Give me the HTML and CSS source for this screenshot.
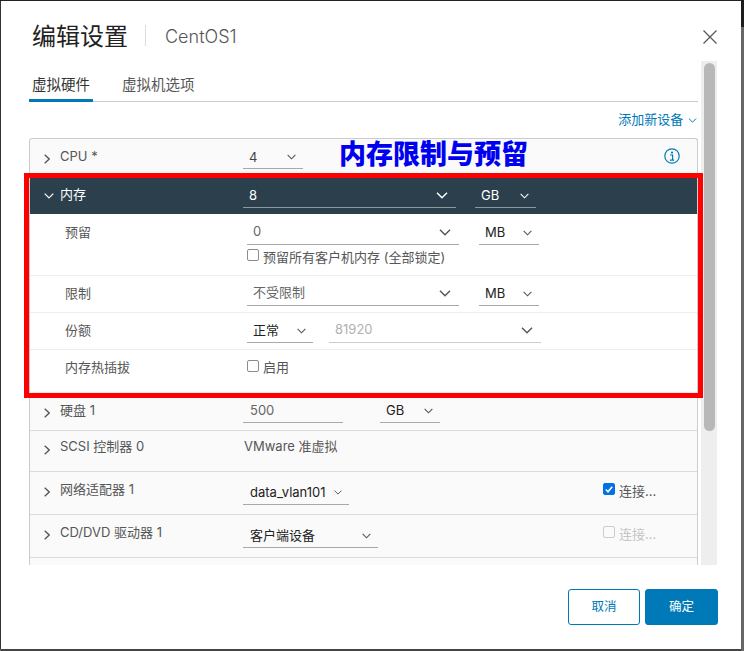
FILE: index.html
```html
<!DOCTYPE html>
<html>
<head>
    <meta charset="utf-8" />
    <title>编辑设置</title>
    <link rel="stylesheet" href="styles.css">
</head>
<body>
    <svg class="defs" width="0" height="0">
        <symbol id="chev" viewBox="0 0 10 6"><path d="M.7.7 5 5 9.3.7" fill="none" stroke="currentColor" stroke-width="1.2"/></symbol>
        <symbol id="caret" viewBox="0 0 6 10"><path d="M.7.7 5.2 5 .7 9.3" fill="none" stroke="currentColor" stroke-width="1.3"/></symbol>
    </svg>
    <div class="dialog">
        <div class="header">
            <h1 class="title">编辑设置</h1>
            <span class="divider"></span>
            <span class="vmname">CentOS1</span>
            <svg class="close" width="14" height="14" viewBox="0 0 14 14"><path d="M.5.5 13.5 13.5M13.5.5.5 13.5" fill="none" stroke="#555" stroke-width="1.2"/></svg>
        </div>
        <div class="main">
            <div class="content">
                <div class="tabs">
                    <span class="tab tab-active">虚拟硬件</span>
                    <span class="tab">虚拟机选项</span>
                </div>
                <div class="toolbar">
                    <span class="add">添加新设备 <svg class="chev-sm" width="9" height="5"><use href="#chev"/></svg></span>
                </div>
                <div class="table">
                    <div class="row row-cpu">
                        <svg class="caret" width="6" height="10"><use href="#caret"/></svg>
                        <span class="label">CPU *</span>
                        <span class="field w60"><span class="val down">4</span><svg class="chev" width="9" height="6"><use href="#chev"/></svg></span>
                        <svg class="info" width="16" height="16" viewBox="0 0 16 16"><circle cx="8" cy="8" r="7.2" fill="none" stroke="#0079b8" stroke-width="1.2"/><circle cx="8" cy="4.6" r="1.1" fill="#0079b8"/><path d="M6 7h2.6v5M5.8 12.2h4.4" fill="none" stroke="#0079b8" stroke-width="1.2"/></svg>
                    </div>
                    <div class="row row-head">
                        <svg class="caret-down" width="10" height="6"><use href="#chev"/></svg>
                        <span class="label up">内存</span>
                        <span class="field w213"><span class="val">8</span><svg class="chev chev-lg" width="12" height="7"><use href="#chev"/></svg></span>
                        <span class="field w61 gap19"><span class="val">GB</span><svg class="chev" width="9" height="6"><use href="#chev"/></svg></span>
                    </div>
                    <div class="row sub row-res">
                        <span class="label sub-label">预留</span>
                        <div class="stack">
                            <div class="inline">
                                <span class="field w212"><span class="val muted up">0</span><svg class="chev chev-lg" width="12" height="7"><use href="#chev"/></svg></span>
                                <span class="field w60 gap20"><span class="val dark">MB</span><svg class="chev" width="9" height="6"><use href="#chev"/></svg></span>
                            </div>
                            <label class="check res-check"><span class="box"></span>预留所有客户机内存 (全部锁定)</label>
                        </div>
                    </div>
                    <div class="row sub row-limit">
                        <span class="label sub-label">限制</span>
                        <span class="field w212"><span class="val muted up">不受限制</span><svg class="chev chev-lg" width="12" height="7"><use href="#chev"/></svg></span>
                        <span class="field w60 gap20"><span class="val dark">MB</span><svg class="chev" width="9" height="6"><use href="#chev"/></svg></span>
                    </div>
                    <div class="row sub row-shares">
                        <span class="label sub-label">份额</span>
                        <span class="field w66"><span class="val dark">正常</span><svg class="chev" width="9" height="6"><use href="#chev"/></svg></span>
                        <span class="field w212 gap16 off"><span class="val disabled up">81920</span><svg class="chev chev-lg" width="12" height="7"><use href="#chev"/></svg></span>
                    </div>
                    <div class="row sub row-hot">
                        <span class="label sub-label up">内存热插拔</span>
                        <label class="check hot-check"><span class="box"></span>启用</label>
                    </div>
                    <div class="row row-disk">
                        <svg class="caret" width="6" height="10"><use href="#caret"/></svg>
                        <span class="label">硬盘 1</span>
                        <span class="field w100"><span class="val muted">500</span></span>
                        <span class="field w60 gap37"><span class="val dark">GB</span><svg class="chev" width="9" height="6"><use href="#chev"/></svg></span>
                    </div>
                    <div class="row row-scsi">
                        <svg class="caret" width="6" height="10"><use href="#caret"/></svg>
                        <span class="label up">SCSI 控制器 0</span>
                        <span class="plain">VMware 准虚拟</span>
                    </div>
                    <div class="row row-net">
                        <svg class="caret" width="6" height="10"><use href="#caret"/></svg>
                        <span class="label">网络适配器 1</span>
                        <span class="field drop w106"><span class="val dark">data_vlan101</span><svg class="chev" width="8" height="5"><use href="#chev"/></svg></span>
                        <label class="check connect"><span class="box box-on"><svg width="8" height="7" viewBox="0 0 8 7"><path d="M.8 3.5 3 5.7 7.2.8" fill="none" stroke="#fff" stroke-width="1.6"/></svg></span>连接...</label>
                    </div>
                    <div class="row row-cd">
                        <svg class="caret" width="6" height="10"><use href="#caret"/></svg>
                        <span class="label">CD/DVD 驱动器 1</span>
                        <span class="field drop w135"><span class="val dark">客户端设备</span><svg class="chev" width="9" height="6"><use href="#chev"/></svg></span>
                        <label class="check connect connect-off"><span class="box box-off"></span>连接...</label>
                    </div>
                </div>
            </div>
            <div class="track"><div class="thumb"></div></div>
        </div>
        <div class="footer">
            <button class="btn btn-cancel">取消</button>
            <button class="btn btn-ok">确定</button>
        </div>
        <div class="note">内存限制与预留</div>
        <div class="redbox"></div>
    </div>
</body>
</html>
```

FILE: styles.css
```css
*
{
    box-sizing: border-box;
}

html, body
{
    margin: 0;
    height: 651px;
    overflow: hidden;
}

body
{
    background: linear-gradient(#1c1c1c 27px, #666 27px);
    font: 13px/18px Inter, "Noto Sans CJK SC", sans-serif;
    color: #565656;
}

.defs
{
    position: absolute;
}

.dialog
{
    position: relative;
    display: flex;
    flex-direction: column;
    width: 740px;
    height: 648px;
    margin: 1px 0 0 1px;
    background: #fff;
    box-shadow: -1px 0 0 #333, 0 -1px 0 #222, 0 2px 0 #444;
}

.header
{
    display: flex;
    align-items: flex-start;
    height: 60px;
    padding: 19px 24px 0 31px;
}

.title
{
    margin: 0;
    font-size: 24px;
    font-weight: 400;
    line-height: 34px;
    color: #222;
}

.divider
{
    width: 1px;
    height: 21px;
    margin: 5px 19px 0 17px;
    background: #ddd;
}

.vmname
{
    font-size: 18px;
    font-weight: 300;
    line-height: 34px;
    color: #565656;
}

.close
{
    margin: 10px 0 0 auto;
}

.main
{
    display: flex;
    height: 504px;
    padding-left: 28px;
}

.content
{
    display: flex;
    flex-direction: column;
    width: 669px;
    padding-top: 11px;
}

.tabs
{
    display: flex;
    flex: none;
    height: 30px;
    border-bottom: 1px solid #ccc;
}

.tab
{
    height: 30px;
    padding: 3px 3px 0;
    margin-right: 26px;
    font-size: 14.5px;
    line-height: 20px;
}

.tab-active
{
    color: #333;
    border-bottom: 3px solid #0079b8;
}

.toolbar
{
    display: flex;
    flex: none;
    align-items: center;
    justify-content: flex-end;
    height: 36px;
    padding: 0 1px 2px 0;
}

.add
{
    color: #0079b8;
}

.chev-sm
{
    margin-left: 1px;
    vertical-align: 1px;
}

.table
{
    flex: 1;
    overflow: hidden;
    background: #fafafa;
    border: 1px solid #ccc;
    border-bottom: 0;
    border-radius: 3px 3px 0 0;
}

.row
{
    display: flex;
    align-items: flex-start;
    padding: 8px 0 0 14px;
    border-bottom: 1px solid #dcdcdc;
}

.sub
{
    padding-left: 35px;
    background: #fff;
    border-bottom-color: #eee;
}

.caret
{
    flex: none;
    margin: 7px 10px 0 0;
    color: #555;
}

.caret-down
{
    flex: none;
    margin: 7px 6px 0 0;
    color: #fff;
}

.label
{
    flex: none;
    width: 183px;
}

.up
{
    margin-top: -1px;
}

.down
{
    margin-top: 1px;
}

.sub-label
{
    width: 182px;
}

.field
{
    display: flex;
    flex: none;
    align-items: flex-start;
    justify-content: space-between;
    height: 22px;
    padding: 0 7px;
    border-bottom: 1px solid #a8a8a8;
}

.sub .field,
.row-head .field,
.row-cpu .field,
.gap37
{
    padding-left: 6px;
}

.off
{
    border-bottom-color: #ccc;
}

.val
{
    color: #444;
}

.muted
{
    color: #666;
}

.dark
{
    color: #222;
}

.disabled
{
    color: #b0b0b0;
}

.chev
{
    flex: none;
    margin-top: 7px;
    color: #555;
}

.chev-lg
{
    margin-top: 6px;
    margin-right: 1px;
}

.w60 { width: 60px; }
.w61 { width: 61px; }
.w66 { width: 66px; }
.w100 { width: 100px; }
.w106 { width: 106px; }
.w135 { width: 135px; }
.w212 { width: 212px; }
.w213 { width: 213px; }
.gap16 { margin-left: 16px; }
.gap19 { margin-left: 19px; }
.gap20 { margin-left: 20px; }
.gap37 { margin-left: 37px; }

.row-cpu
{
    height: 39px;
}

.info
{
    margin: 1px 17px 0 auto;
}

.row-head
{
    height: 36px;
    background: #2b3f4c;
    border-bottom-color: #2b3f4c;
    color: #fff;
}

.row-head .val
{
    color: #fff;
}

.row-head .chev
{
    color: #fff;
}

.row-head .field
{
    border-bottom-color: #8c979e;
}

.row-res
{
    height: 62px;
    padding-top: 9px;
}

.inline
{
    display: flex;
}

.stack
{
    display: flex;
    flex-direction: column;
}

.check
{
    display: flex;
    align-items: flex-start;
    line-height: 16px;
}

.box
{
    display: flex;
    flex: none;
    align-items: center;
    justify-content: center;
    width: 12px;
    height: 12px;
    margin: 0 4px 0 0;
    background: #fff;
    border: 1px solid #8c8c8c;
    border-radius: 2px;
}

.res-check
{
    margin-top: 4px;
}

.row-limit,
.row-shares
{
    height: 37px;
}

.row-hot
{
    height: 43px;
    padding-top: 9px;
}

.hot-check .box
{
    margin-top: 1px;
}

.row-disk
{
    height: 38px;
}

.row-scsi
{
    height: 41px;
    padding-top: 7px;
}

.plain
{
    margin: -1px 0 0 1px;
}

.row-net,
.row-cd
{
    height: 43px;
}

.drop
{
    margin-top: 3px;
}

.connect
{
    width: 52px;
    margin: 3px 42px 0 auto;
    white-space: nowrap;
}

.box-on
{
    background: #0072e6;
    border-color: #0072e6;
}

.box-off
{
    background: #fafafa;
    border-color: #ccc;
}

.connect-off
{
    color: #c4c4c4;
}

.track
{
    flex: none;
    width: 16px;
    margin-left: 3px;
    padding: 2px 2px 0 3px;
    background: #eee;
}

.thumb
{
    width: 11px;
    height: 368px;
    background: #b8b8b8;
    border-radius: 6px;
}

.footer
{
    display: flex;
    justify-content: flex-end;
    gap: 5px;
    padding: 24px 23px 0 0;
}

.btn
{
    width: 72px;
    height: 36px;
    padding: 0;
    font: 12.5px/18px Inter, "Noto Sans CJK SC", sans-serif;
    border: 1px solid #0079b8;
    border-radius: 3px;
}

.btn-cancel
{
    background: #fff;
    color: #0079b8;
}

.btn-ok
{
    width: 73px;
    background: #0079b8;
    color: #fff;
}

.note
{
    position: absolute;
    left: 338px;
    top: 136px;
    font-size: 27px;
    font-weight: 900;
    line-height: 36px;
    color: #0000f0;
}

.redbox
{
    position: absolute;
    left: 23px;
    top: 172px;
    width: 679px;
    height: 225px;
    border: 5px solid #f00;
}
```
